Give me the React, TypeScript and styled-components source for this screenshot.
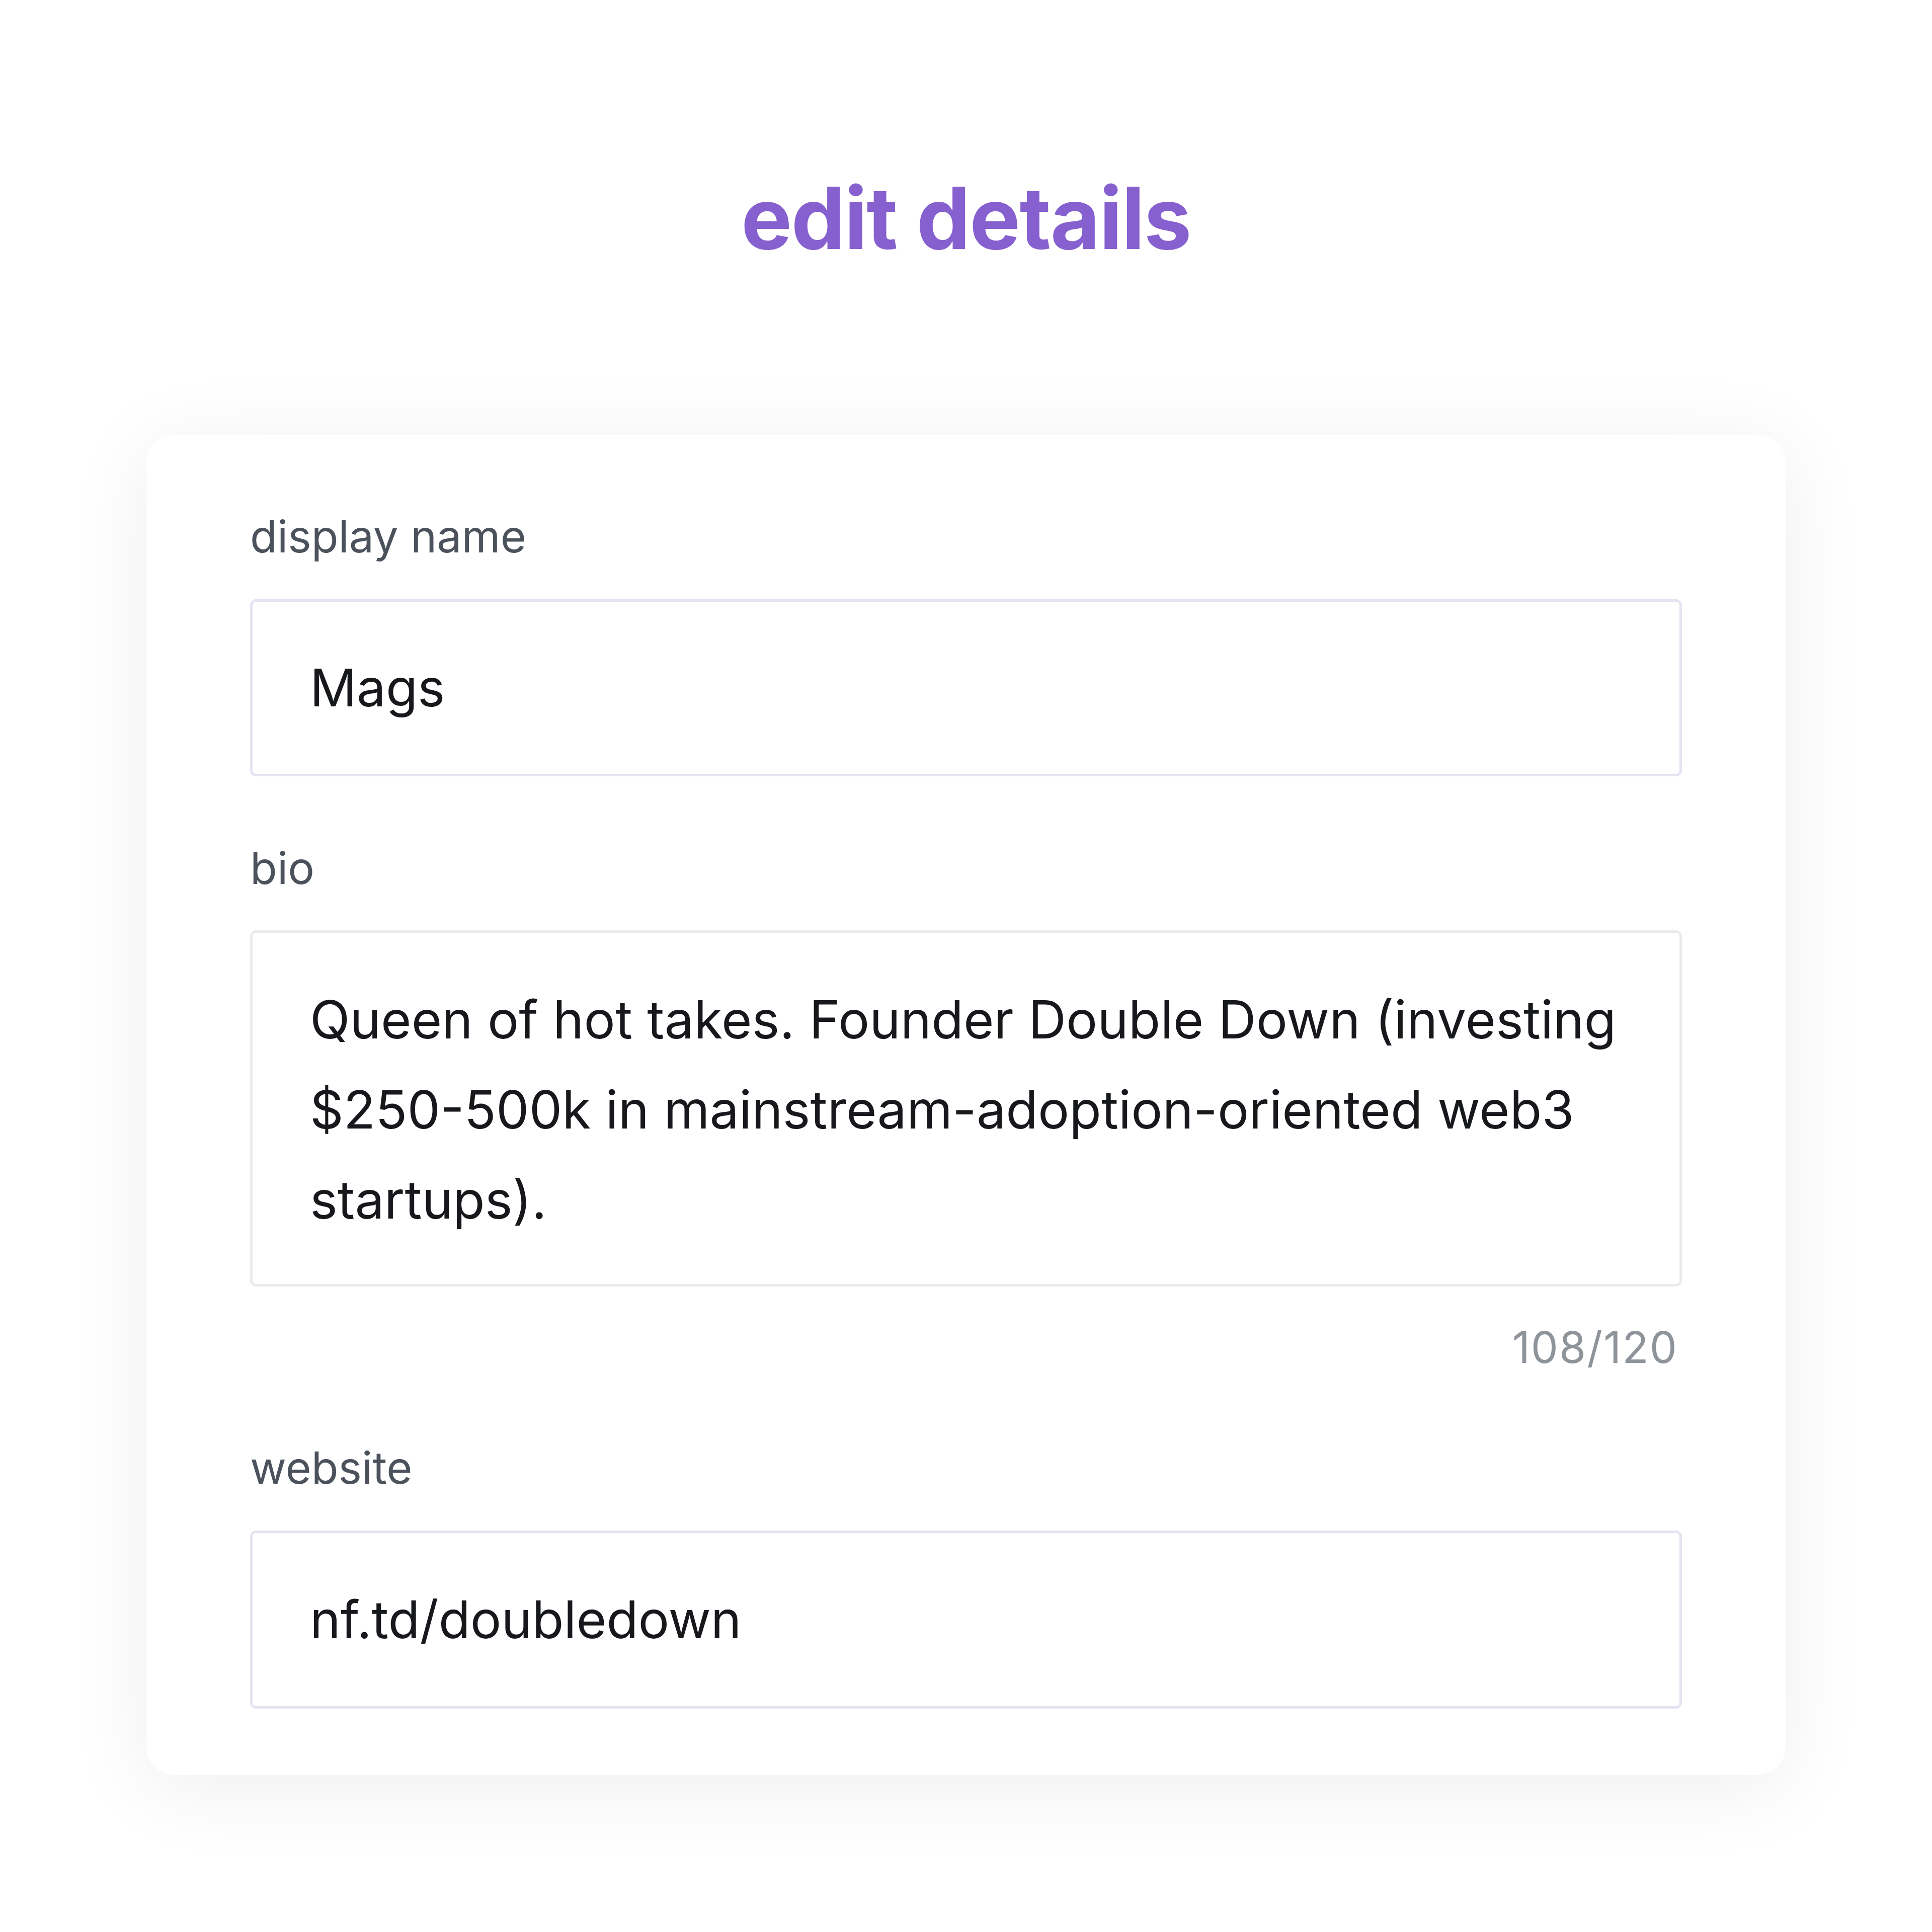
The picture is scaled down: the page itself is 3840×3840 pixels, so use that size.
import React from 'react'
import styled, { createGlobalStyle } from 'styled-components'

const GlobalStyle = createGlobalStyle`
  html, body {
    margin: 0;
    padding: 0;
    background: #ffffff;
  }
  * {
    box-sizing: border-box;
  }
`

const Page = styled.main`
  width: 3840px;
  height: 3840px;
  display: flex;
  flex-direction: column;
  align-items: center;
  padding-top: 348px;
  background: #ffffff;
  font-family: Inter, 'Noto Sans', sans-serif;
`

const Title = styled.h1`
  margin: 0;
  font-size: 170px;
  line-height: 1;
  font-weight: 700;
  letter-spacing: -0.01em;
  color: #8660ce;
`

const Card = styled.section`
  width: 3258px;
  margin-top: 346px;
  padding: 150px 206px 132px;
  background: #ffffff;
  border-radius: 56px;
  box-shadow: 0 24px 170px rgba(0, 0, 0, 0.07);
  display: flex;
  flex-direction: column;
`

const Field = styled.div<{ $gap?: number }>`
  display: flex;
  flex-direction: column;
  margin-top: ${p => p.$gap ?? 0}px;
`

const Label = styled.label`
  font-size: 88px;
  line-height: 1.2;
  color: #4b525c;
  margin-bottom: 71px;
`

const TextInput = styled.input<{ $height: number }>`
  width: 100%;
  height: ${p => p.$height}px;
  padding: 0 114px;
  border: 5px solid #e6e3f2;
  border-radius: 12px;
  background: #ffffff;
  font-family: Inter, 'Noto Sans', sans-serif;
  font-size: 103px;
  color: #16181c;
  outline: none;
`

const TextArea = styled.div`
  height: 708px;
  padding: 83px 114px 0;
  border: 5px solid #ebebee;
  border-radius: 12px;
  font-size: 104px;
  line-height: 179px;
  color: #16181c;
`

const Counter = styled.div`
  align-self: flex-end;
  margin-top: 70px;
  padding-right: 8px;
  font-size: 86px;
  line-height: 1.2;
  letter-spacing: 2px;
  color: #8f949b;
`

const bioLines = [
  'Queen of hot takes. Founder Double Down (investing',
  '$250-500k in mainstream-adoption-oriented web3',
  'startups).',
]

export default function App() {
  return (
    <>
      <GlobalStyle />
      <Page>
        <Title>edit details</Title>
        <Card>
          <Field>
            <Label>display name</Label>
            <TextInput $height={352} value="Mags" readOnly />
          </Field>
          <Field $gap={130}>
            <Label>bio</Label>
            <TextArea>
              {bioLines.map(line => (
                <div key={line}>{line}</div>
              ))}
            </TextArea>
            <Counter>108/120</Counter>
          </Field>
          <Field $gap={135}>
            <Label>website</Label>
            <TextInput $height={354} value="nf.td/doubledown" readOnly />
          </Field>
        </Card>
      </Page>
    </>
  )
}
